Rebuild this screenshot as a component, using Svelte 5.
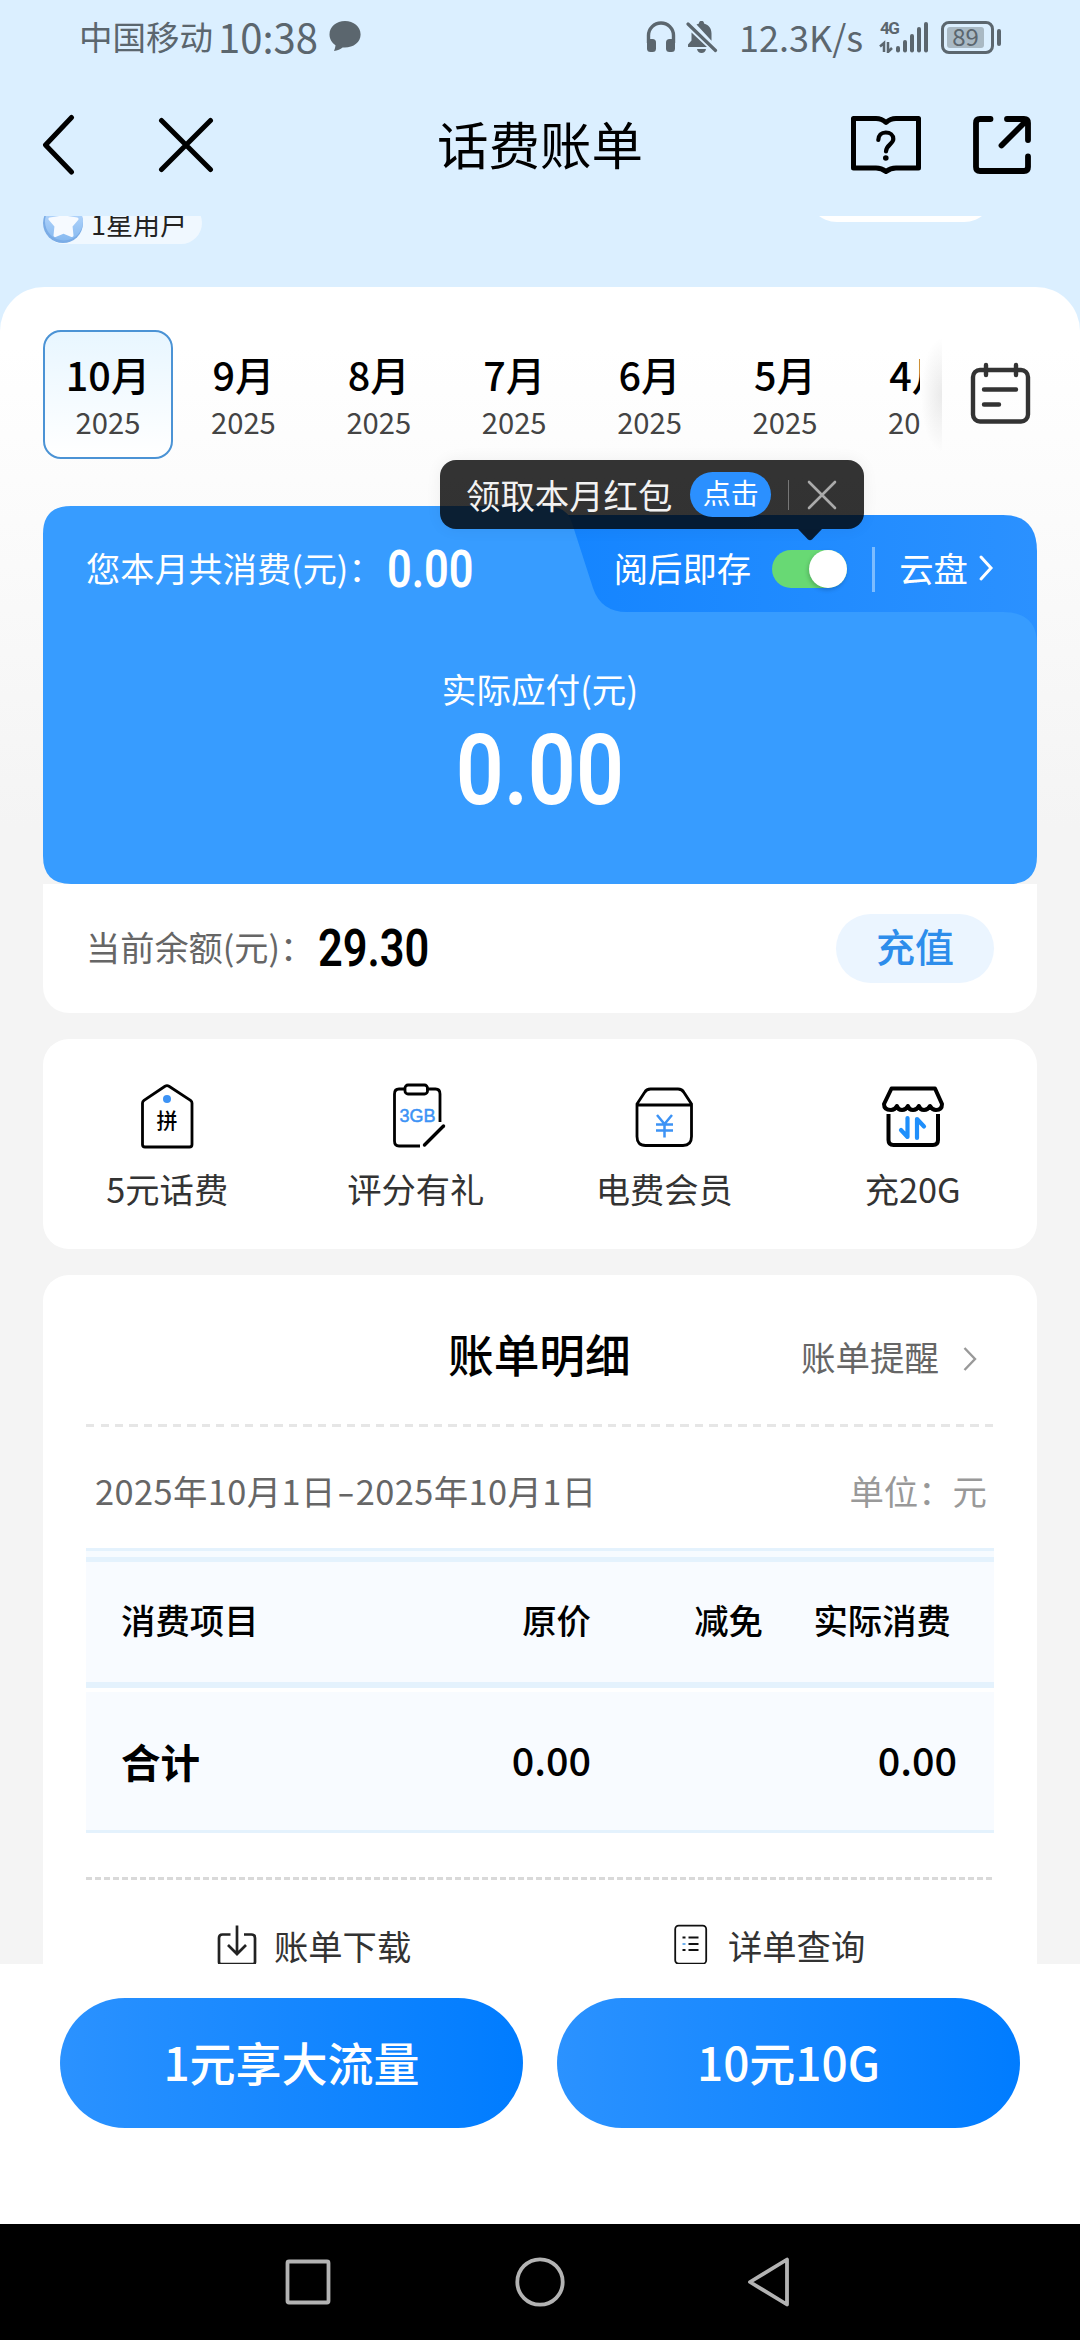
<script>
  const months = ['10月', '9月', '8月', '7月', '6月', '5月', '4月'];
  let saveAfterRead = $state(true);
  let tipOpen = $state(true);
  const rows = [{ name: '合计', price: '0.00', off: '', paid: '0.00' }];
</script>

<div class="screen">
  <header class="status">
    <div class="st-left">
      <span class="carrier">中国移动</span>
      <span class="clock">10:38</span>
      <svg class="bubble" width="32" height="32" viewBox="0 0 32 32"><path d="M16 1C7.500 1 0.500 6.500 0.500 14.500c0 4.500 2.500 8.500 6 10.800C6.300 27.500 5.800 29 5 31c3.500-.3 6.500-1.800 8.600-3.500 10 1 18-5 18-13C31.600 6.500 24.500 1 16 1z" fill="#5b666e" /></svg>
    </div>
    <div class="st-right">
      <svg width="30" height="32" viewBox="0 0 30 32"><path d="M2.500 22V14.500a12.500 12.500 0 0 1 25 0V22" fill="none" stroke="#5b666e" stroke-width="3.400" /><rect x="1" y="18" width="9" height="13" rx="3.500" fill="#5b666e" /><rect x="20" y="18" width="9" height="13" rx="3.500" fill="#5b666e" /></svg>
      <svg class="bell" width="32" height="34" viewBox="0 0 32 34"><path d="M10.500 4.500 13 3.400C13 1.600 14 1 15.500 1S18 1.600 18 3.400c5 1.400 7.500 5 7.500 10.100v7.200zM5.500 12.500 21 27H2v-2.500l3.500-4z" fill="#5b666e" /><path d="M11 29h9c-.5 2.600-2 4-4.500 4S11.500 31.600 11 29z" fill="#5b666e" /><path d="M2 4 29.500 30.500" stroke="#5b666e" stroke-width="3.200" stroke-linecap="round" /></svg>
      <span class="speed">12.3K/s</span>
      <div class="net">
        <span class="gen">4G</span>
        <svg width="50" height="32" viewBox="0 0 50 32"><g fill="#5b666e"><rect x="17" y="25" width="4" height="6.500" rx="2" /><rect x="24" y="19" width="4" height="12.500" rx="2" /><rect x="31" y="13" width="4" height="18.500" rx="2" /><rect x="38" y="6" width="4" height="25.500" rx="2" /><rect x="45" y="1" width="4" height="30.500" rx="2" /></g><path d="M1 25.500 5 22V31M9 21v10l4-4" fill="none" stroke="#5b666e" stroke-width="2.500" /></svg>
      </div>
      <div class="battery"><span>89</span></div>
    </div>
  </header>

  <nav class="top">
    <svg class="back" width="34" height="62" viewBox="0 0 34 62"><path d="M29.500 3.500 3.500 31l26 27" fill="none" stroke="#000" stroke-width="5" stroke-linecap="round" stroke-linejoin="round" /></svg>
    <svg class="close" width="56" height="56" viewBox="0 0 56 56"><path d="M3.500 3.500l49 49M52.500 3.500l-49 49" stroke="#000" stroke-width="5" stroke-linecap="round" /></svg>
    <h1>话费账单</h1>
    <svg class="book" width="72" height="62" viewBox="0 0 72 62"><path d="M3.500 4.500H26c4 0 7 1.200 10 4 3-2.800 6-4 10-4h22.500V54H46c-4 0-7 1.200-10 3.500-3-2.300-6-3.500-10-3.500H3.500z" fill="none" stroke="#000" stroke-width="5" stroke-linejoin="round" /><path d="M28.300 26c.2-4.600 3-7.500 7.500-7.500 4.400 0 7.500 2.600 7.500 6.500 0 5-7.300 6-7.300 12.500" fill="none" stroke="#000" stroke-width="4.200" stroke-linecap="round" /><circle cx="35.800" cy="44" r="2.800" fill="#000" /></svg>
    <svg class="share" width="60" height="60" viewBox="0 0 60 60"><path d="M18.500 4H8Q4 4 4 8v44q0 4 4 4h44q4 0 4-4V41.500M35 4h17q4 0 4 4v17M54 6 29.500 30.500" fill="none" stroke="#000" stroke-width="5.800" stroke-linecap="round" /></svg>
  </nav>

  <main>
    <div class="profile">
      <div class="star-badge">
        <svg width="42" height="42" viewBox="0 0 42 42"><defs><linearGradient id="coin" x1="0" y1="0" x2="0" y2="1"><stop offset="0" stop-color="#c3dfff" /><stop offset="1" stop-color="#86b9f0" /></linearGradient></defs><circle cx="20" cy="21" r="20" fill="#7aace6" /><circle cx="21" cy="19.500" r="19" fill="url(#coin)" /><path d="M20.500 7l4 8.500 9.500 1.500-6 7 1 9.500-8.500-3.500-8.500 3.500 1-9.500-6-7 9.500-1.500z" fill="#f6faff" stroke="#f6faff" stroke-width="3" stroke-linejoin="round" /></svg>
        <span>1星用户</span>
      </div>
      <div class="pill"></div>
    </div>

    <section class="sheet">
      <div class="months">
        <div class="strip">
          {#each months as m, i}
            <div class="month" class:active={i === 0}><b>{m}</b><span>2025</span></div>
          {/each}
        </div>
        <div class="edge"></div>
        <svg class="cal" width="62" height="64" viewBox="0 0 62 64"><g fill="none" stroke="#333" stroke-width="4.400" stroke-linecap="round"><rect x="3" y="9" width="55" height="51.500" rx="7" /><path d="M16 4v10M46 4v10M14 28.500h32M14 43.500h15" /></g></svg>
      </div>

      <div class="account">
        <div class="blue">
          <svg class="shape" width="994" height="378" viewBox="0 0 994 378">
            <defs><linearGradient id="deep" x1="530" y1="0" x2="994" y2="0" gradientUnits="userSpaceOnUse"><stop offset="0" stop-color="#1585ff" /><stop offset="1" stop-color="#2b91ff" /></linearGradient></defs>
            <path d="M500 9H960Q994 9 994 45V200H500z" fill="url(#deep)" />
            <path d="M28 0H504Q524 0 529 17L550 82Q558 106 584 106H960Q994 106 994 138V350Q994 378 966 378H28Q0 378 0 350V28Q0 0 28 0z" fill="#379cff" />
          </svg>
          <div class="summary">
            <span class="label">您本月共消费(元)：</span>
            <span class="num small">0.00</span>
            <div class="cloud">
              <span>阅后即存</span>
              <button class="switch" class:on={saveAfterRead} aria-label="阅后即存" onclick={() => (saveAfterRead = !saveAfterRead)}><i></i></button>
              <i class="bar"></i>
              <span>云盘</span>
              <svg width="16" height="28" viewBox="0 0 16 28"><path d="M3 3l10 11L3 25" fill="none" stroke="#fff" stroke-width="3" stroke-linecap="round" /></svg>
            </div>
          </div>
          <div class="due">
            <span>实际应付(元)</span>
            <strong class="num big">0.00</strong>
          </div>
        </div>
        <div class="balance">
          <span class="label">当前余额(元)：</span>
          <span class="num small">29.30</span>
          <button>充值</button>
        </div>
        {#if tipOpen}
          <div class="tip">
            <span>领取本月红包</span>
            <em>点击</em>
            <i></i>
            <button aria-label="关闭" onclick={() => (tipOpen = false)}><svg width="30" height="30" viewBox="0 0 30 30"><path d="M2 2l26 26M28 2 2 28" stroke="#aaa" stroke-width="2.600" stroke-linecap="round" /></svg></button>
            <svg class="nub" width="24" height="12" viewBox="0 0 24 12"><path d="M0 0h24L14 10.500q-2 1.500-4 0z" fill="#000" fill-opacity=".8" /></svg>
          </div>
        {/if}
      </div>

      <div class="card services">
        <div>
          <svg width="66" height="68" viewBox="0 0 66 68"><path d="M8.500 21Q8.500 19.500 10 18.300L31 4.300q2-1.200 4 0L56.500 18.300Q58 19.500 58 21V62.500q0 2.500-2.500 2.500h-44.500Q8.500 65 8.500 62.500z" fill="none" stroke="#000" stroke-width="2.800" /><circle cx="33" cy="17" r="4" fill="#3d93f5" /><text x="33" y="46" text-anchor="middle" font-size="21" font-weight="500">拼</text></svg>
          <span>5元话费</span>
        </div>
        <div>
          <svg width="66" height="68" viewBox="0 0 66 68"><path d="M21 7H16Q11.500 7 11.500 12V59Q11.500 64 16 64H37M43 7h9.500Q57 7 57 12V40" fill="none" stroke="#000" stroke-width="2.800" /><rect x="22" y="3" width="22.500" height="9" rx="3" fill="none" stroke="#000" stroke-width="2.800" /><path d="M41.500 63 60.500 44" stroke="#000" stroke-width="3.400" stroke-linecap="round" /><text class="gb" x="34.500" y="40" text-anchor="middle" font-size="18" fill="#3d93f5" stroke="#3d93f5" stroke-width=".5">3GB</text></svg>
          <span>评分有礼</span>
        </div>
        <div>
          <svg width="66" height="68" viewBox="0 0 66 68"><path d="M6 22 13.500 10.500Q15.500 7 19.500 7H47Q51 7 53 10.500L60.500 22V54.500Q60.500 63.500 52 63.500H14.500Q6 63.500 6 54.500zM6 23H60.500" fill="none" stroke="#000" stroke-width="2.800" /><path d="M26 33l7.500 9 7.500-9M33.500 42v13.500M25 42.500h17M25 48.500h17" fill="none" stroke="#3d93f5" stroke-width="2.500" /></svg>
          <span>电费会员</span>
        </div>
        <div>
          <svg width="66" height="68" viewBox="0 0 66 68"><path d="M11.500 6.500H55L62 22q0 6-6 6-4 0-6-4-2 4-6 4t-5-4q-2 4-6 4t-5-4q-2 4-6 4t-5-4q-2 4-6 4-7 0-7-6z" fill="none" stroke="#000" stroke-width="4" stroke-linejoin="round" /><path d="M8.500 32V58q0 5 5 5H53q5 0 5-5V32" fill="none" stroke="#000" stroke-width="4" /><path d="M27.500 36V55L21 48M37 56V37l7 7.500" fill="none" stroke="#1f8ffb" stroke-width="4.200" stroke-linecap="round" stroke-linejoin="round" /></svg>
          <span>充20G</span>
        </div>
      </div>

      <div class="card detail">
        <div class="head">
          <h2>账单明细</h2>
          <span class="remind">账单提醒<svg width="16" height="26" viewBox="0 0 16 26"><path d="M2.500 2l10.500 11L2.500 24" fill="none" stroke="#999" stroke-width="2.400" /></svg></span>
        </div>
        <div class="dash wide"></div>
        <div class="period"><span class="range">2025年10月1日<i>-</i>2025年10月1日</span><span class="unit">单位：元</span></div>
        <div class="table">
          <div class="cap"></div>
          <div class="tr th"><span>消费项目</span><span>原价</span><span>减免</span><span>实际消费</span></div>
          {#each rows as r}
            <div class="tr td"><span>{r.name}</span><span>{r.price}</span><span>{r.off}</span><span>{r.paid}</span></div>
          {/each}
        </div>
        <div class="dash fine"></div>
        <div class="links">
          <div>
            <svg width="40" height="42" viewBox="0 0 40 42"><path d="M13.500 10.500H5.500Q2 10.500 2 14V38q0 2 2 2H36q2 0 2-2V14q0-3.500-3.500-3.500H27M20 1.500V29M11 21l9 9 9-9" fill="none" stroke="#222" stroke-width="2.700" /></svg>
            <span>账单下载</span>
          </div>
          <div>
            <svg width="36" height="42" viewBox="0 0 36 42"><rect x="2.200" y="1.700" width="31" height="38" rx="3.500" fill="none" stroke="#111" stroke-width="1.800" /><path d="M15.500 13.500h10M15.500 20h10M15.500 26h10M9.500 13.500h3M9.500 26h3" stroke="#111" stroke-width="1.800" /><path d="M9.500 20h3" stroke="#5da8ee" stroke-width="1.800" /></svg>
            <span>详单查询</span>
          </div>
        </div>
      </div>
    </section>
  </main>

  <footer><button>1元享大流量</button><button>10元10G</button></footer>

  <div class="system">
    <svg width="50" height="54" viewBox="0 0 50 54"><rect x="4.500" y="6.500" width="41" height="41" rx="1.500" fill="none" stroke="#b3b3b3" stroke-width="3.800" /></svg>
    <svg width="54" height="54" viewBox="0 0 54 54"><circle cx="27" cy="27" r="22.700" fill="none" stroke="#b3b3b3" stroke-width="3.800" /></svg>
    <svg width="50" height="54" viewBox="0 0 50 54"><path d="M40 4.500V49.500L3 27z" fill="none" stroke="#b3b3b3" stroke-width="3.800" stroke-linejoin="round" /></svg>
  </div>
</div>

<style>
  :global(body) { margin: 0; background: #000; }
  * { box-sizing: border-box; }
  button { border: 0; margin: 0; padding: 0; font-family: inherit; background: none; }
  h1, h2 { margin: 0; font-weight: 400; }
  svg { display: block; flex: none; }
  .screen { width: 1080px; height: 2340px; display: flex; flex-direction: column; overflow: hidden; background: #dbefff; color: #000; font-family: "Noto Sans CJK SC", sans-serif; font-size: 34px; line-height: 1; white-space: nowrap; }

  .status { height: 74px; padding: 0 79px; display: flex; justify-content: space-between; align-items: center; color: #5b666e; }
  .st-left, .st-right { display: flex; align-items: center; }
  .carrier { font-size: 33.500px; width: 139px; padding-bottom: 2px; }
  .clock { font-size: 40px; width: 111px; padding-bottom: 3px; }
  .bubble { margin-top: -2px; }
  .bell { margin-left: 10px; }
  .speed { font-size: 36px; width: 120px; margin-left: 21px; padding-bottom: 2px; }
  .net { position: relative; margin-left: 20px; }
  .gen { position: absolute; left: 1px; top: -1px; font: 700 17px/17px Roboto, sans-serif; letter-spacing: -1.500px; }
  .battery { position: relative; width: 53px; height: 33px; margin-left: 12px; margin-right: 7px; padding: 3px; border: 3px solid #5b666e; border-radius: 8px; display: flex; }
  .battery span { width: 37px; background: #a9b9c4; border-radius: 3px; font-size: 24px; line-height: 18px; text-align: center; }
  .battery::after { content: ""; position: absolute; right: -10px; top: 5px; width: 4px; height: 17px; border-radius: 2px; background: #5b666e; }

  .top { height: 142px; padding-left: 42px; padding-bottom: 1px; display: grid; grid-template-columns: 34px 140px 598px 36px 73px 49px 60px; align-items: center; }
  .top .close { margin-left: 82px; }
  .top h1 { font-size: 51.500px; text-align: center; padding: 0 0 4px 50px; }
  .top .book { grid-column: 5; }
  .top .share { grid-column: 7; }

  main { height: 1748px; overflow: hidden; }
  .profile { height: 71px; padding: 0 86px 0 43px; display: flex; justify-content: space-between; align-items: flex-start; }
  .star-badge { height: 42px; margin-top: -14px; width: 159px; display: flex; align-items: center; background: #f0f8ff; border-radius: 21px; font-size: 27px; color: #222; }
  .star-badge span { margin-left: 6px; }
  .pill { width: 187px; height: 60px; margin-top: -54px; border-radius: 30px; background: #fff; }

  .sheet { height: 1680px; border-radius: 44px 44px 0 0; padding: 43px 43px 0; background: linear-gradient(#fff 0, #fff 60px, #f4f4f4 540px); }
  .months { height: 129px; display: flex; align-items: center; }
  .strip { width: 877px; height: 129px; display: flex; gap: 5.400px; overflow: hidden; }
  .month { flex: none; width: 130px; border: 2px solid transparent; border-radius: 18px; display: flex; flex-direction: column; align-items: center; padding-top: 22px; }
  .month.active { border-color: #4b93d5; background: linear-gradient(#e8f6ff, #fff); }
  .month b { font-weight: 500; font-size: 39.500px; line-height: 40px; }
  .month span { font-size: 29.200px; line-height: 30px; margin-top: 12px; color: #444; }
  .edge { width: 22px; height: 120px; background: radial-gradient(ellipse at 100% 50%, rgba(0,0,0,.08), transparent 68%); }
  .cal { margin: -3px 0 0 28px; }

  .account { position: relative; margin-top: 47px; height: 507px; background: linear-gradient(transparent 378px, #fff 378px); border-radius: 0 0 26px 26px; }
  .blue { position: relative; height: 378px; color: #fff; }
  .shape { position: absolute; inset: 0; }
  .summary { position: relative; height: 126px; padding: 0 43px; display: flex; align-items: center; }
  .label { font-size: 34.200px; padding-bottom: 4px; }
  .summary .label { width: 301px; }
  .num { font-family: Roboto, sans-serif; font-weight: 600; transform: scaleX(.85); transform-origin: 0 50%; }
  .small { font-size: 51px; }
  .summary .num { width: 100px; }
  .cloud { margin-left: auto; display: flex; align-items: center; font-size: 34.400px; }
  .cloud span { padding-bottom: 4px; }
  .switch { width: 75px; height: 38px; border-radius: 19px; background: #b8c4d0; margin-left: 21px; display: flex; }
  .switch.on { background: #68d974; justify-content: flex-end; }
  .switch i { width: 38px; height: 38px; border-radius: 50%; background: #fff; box-shadow: -1px 2px 4px rgba(0,0,0,.2); }
  .cloud .bar { width: 3px; height: 45px; background: #7cbcff; margin: 0 24px 0 25px; }
  .cloud svg { margin-left: 10px; margin-top: -3px; }
  .due { position: relative; display: flex; flex-direction: column; align-items: center; padding-top: 39px; font-size: 34.600px; }
  .due .big { font-size: 99px; line-height: 100px; margin-top: 14px; transform-origin: 50% 50%; }
  .balance { height: 129px; padding: 0 43px; display: flex; align-items: center; color: #666; }
  .balance .label { width: 232px; }
  .balance .num { color: #000; padding-bottom: 1px; }
  .balance button { margin-left: auto; width: 158px; height: 69px; border-radius: 35px; background: #ebf5ff; color: #2d8deb; font-size: 39px; font-weight: 500; padding-bottom: 8px; }

  .tip { position: absolute; left: 397px; top: -46px; width: 424px; height: 69px; border-radius: 16px; background: rgba(0,0,0,.8); box-shadow: 0 0 16px rgba(0,0,0,.06); padding: 0 27px 0 26px; display: flex; align-items: center; color: #f2f2f2; font-size: 34.400px; }
  .tip span { padding-bottom: 1px; }
  .tip em { font-style: normal; width: 81px; height: 45px; border-radius: 23px; background: #2b90ff; color: #fff; font-size: 28px; line-height: 41px; text-align: center; margin-left: 18px; }
  .tip i { width: 1px; height: 30px; background: #777; margin-left: 17px; }
  .tip button { margin-left: auto; }
  .tip .nub { position: absolute; left: 358px; top: 69px; }

  .card { background: #fff; border-radius: 26px; }
  .services { height: 210px; margin-top: 26px; display: grid; grid-template-columns: repeat(4, 1fr); color: #333; }
  .services > div { display: flex; flex-direction: column; align-items: center; padding-top: 43px; }
  .services span { margin-top: 21px; font-size: 34.300px; }
  .gb { font-family: "Liberation Sans", sans-serif; }

  .detail { margin-top: 26px; padding: 0 43px; height: 760px; border-radius: 26px 26px 0 0; }
  .head { height: 149px; padding: 8px 16px 0 0; display: grid; grid-template-columns: 362px 1fr auto; align-items: center; }
  .head h2 { grid-column: 2; font-size: 45.700px; font-weight: 500; }
  .remind { display: flex; align-items: center; color: #666; gap: 23px; padding-top: 6px; font-size: 34.500px; }
  .remind svg { margin-top: 5px; }
  .dash { height: 3px; }
  .wide { background: repeating-linear-gradient(90deg, #e6e6e6 0 8px, transparent 8px 14.500px); }
  .fine { background: repeating-linear-gradient(90deg, #d9d9d9 0 6px, transparent 6px 9px); margin-top: 44px; }
  .period { height: 121px; padding: 5px 7px 0 9px; display: flex; justify-content: space-between; align-items: center; color: #666; font-size: 34.400px; }
  .range { letter-spacing: .4px; }
  .range i { display: inline-block; width: 20px; text-align: center; font-style: normal; letter-spacing: 0; transform: scaleX(1.5); }
  .unit { color: #999; }
  .cap { height: 9px; background: #f7fbff; border-top: 3px solid #e4f2fd; }
  .tr { display: grid; grid-template-columns: 215px 255px 172px 188px; padding-left: 35px; align-items: center; background: #f8fbff; text-align: right; }
  .tr span:first-child { text-align: left; }
  .th { height: 131px; border-top: 5px solid #e4f2fd; border-bottom: 6px solid #e4f2fd; font-weight: 500; font-size: 34.400px; padding-bottom: 5px; }
  .td { height: 141px; margin-top: 4px; border-bottom: 3px solid #e4f2fd; font-weight: 500; font-size: 39.500px; }
  .td span { padding-bottom: 5px; }
  .td span:first-child { font-weight: 700; padding-bottom: 0; }
  .td span:last-child { margin-right: -6px; }
  .links { display: grid; grid-template-columns: 1fr 1fr; color: #333; padding-top: 44px; font-size: 34.300px; }
  .links div { display: flex; align-items: center; padding-left: 131px; gap: 17px; }
  .links div + div { padding-left: 133px; gap: 19px; }

  footer { height: 260px; background: #fff; padding: 34px 60px 0; display: flex; gap: 34px; align-items: flex-start; }
  footer button { flex: 1; height: 130px; border-radius: 65px; background: linear-gradient(90deg, #2b92ff, #007cff); color: #fff; font-size: 46px; font-weight: 500; padding-bottom: 5px; }
  .system { height: 116px; background: #000; display: flex; justify-content: center; align-items: center; gap: 180px; }
</style>
